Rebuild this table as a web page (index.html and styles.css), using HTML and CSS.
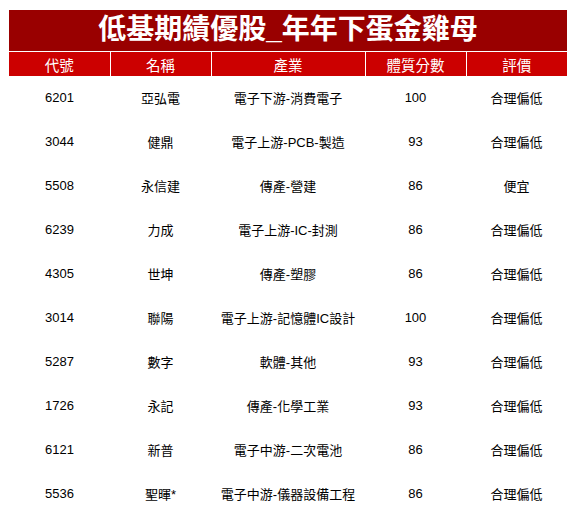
FILE: index.html
```html
<!DOCTYPE html>
<html lang="zh-Hant">
<head>
<meta charset="utf-8">
<link rel="stylesheet" href="styles.css">
</head>
<body>
<div class="sheet">
  <div class="title">低基期績優股_年年下蛋金雞母</div>
  <table class="grid">
    <colgroup>
      <col class="c1"><col class="c2"><col class="c3"><col class="c4"><col class="c5">
    </colgroup>
    <thead>
      <tr><th>代號</th><th>名稱</th><th>產業</th><th>體質分數</th><th>評價</th></tr>
    </thead>
    <tbody>
      <tr><td>6201</td><td>亞弘電</td><td>電子下游-消費電子</td><td>100</td><td>合理偏低</td></tr>
      <tr><td>3044</td><td>健鼎</td><td>電子上游-PCB-製造</td><td>93</td><td>合理偏低</td></tr>
      <tr><td>5508</td><td>永信建</td><td>傳產-營建</td><td>86</td><td>便宜</td></tr>
      <tr><td>6239</td><td>力成</td><td>電子上游-IC-封測</td><td>86</td><td>合理偏低</td></tr>
      <tr><td>4305</td><td>世坤</td><td>傳產-塑膠</td><td>86</td><td>合理偏低</td></tr>
      <tr><td>3014</td><td>聯陽</td><td>電子上游-記憶體IC設計</td><td>100</td><td>合理偏低</td></tr>
      <tr><td>5287</td><td>數字</td><td>軟體-其他</td><td>93</td><td>合理偏低</td></tr>
      <tr><td>1726</td><td>永記</td><td>傳產-化學工業</td><td>93</td><td>合理偏低</td></tr>
      <tr><td>6121</td><td>新普</td><td>電子中游-二次電池</td><td>86</td><td>合理偏低</td></tr>
      <tr><td>5536</td><td>聖暉*</td><td>電子中游-儀器設備工程</td><td>86</td><td>合理偏低</td></tr>
    </tbody>
  </table>
</div>
</body>
</html>
```

FILE: styles.css
```css
html, body {
  margin: 0;
  padding: 0;
  background: #ffffff;
}
body {
  font-family: "Liberation Sans", Arial, "Noto Sans CJK TC", sans-serif;
  color: #000;
}
.sheet {
  width: 558px;
  margin: 10px 0 0 9px;
}
.title {
  height: 41px;
  background: #990000;
  color: #fff;
  font-weight: bold;
  font-size: 28px;
  line-height: 40px;
  text-align: center;
  border-bottom: 1px solid #fff;
}
.grid {
  width: 558px;
  border-collapse: collapse;
  table-layout: fixed;
}
.c1, .c2, .c4, .c5 { width: 101px; }
.c3 { width: 154px; }
.grid th {
  background: #cc0000;
  color: #fff;
  font-weight: normal;
  font-size: 14.5px;
  height: 24px;
  padding: 0;
  border-left: 1px solid #fff;
  text-align: center;
}
.grid th:first-child { border-left: none; }
.grid td {
  height: 42px;
  padding: 0 0 2px;
  font-size: 13px;
  text-align: center;
}
```
